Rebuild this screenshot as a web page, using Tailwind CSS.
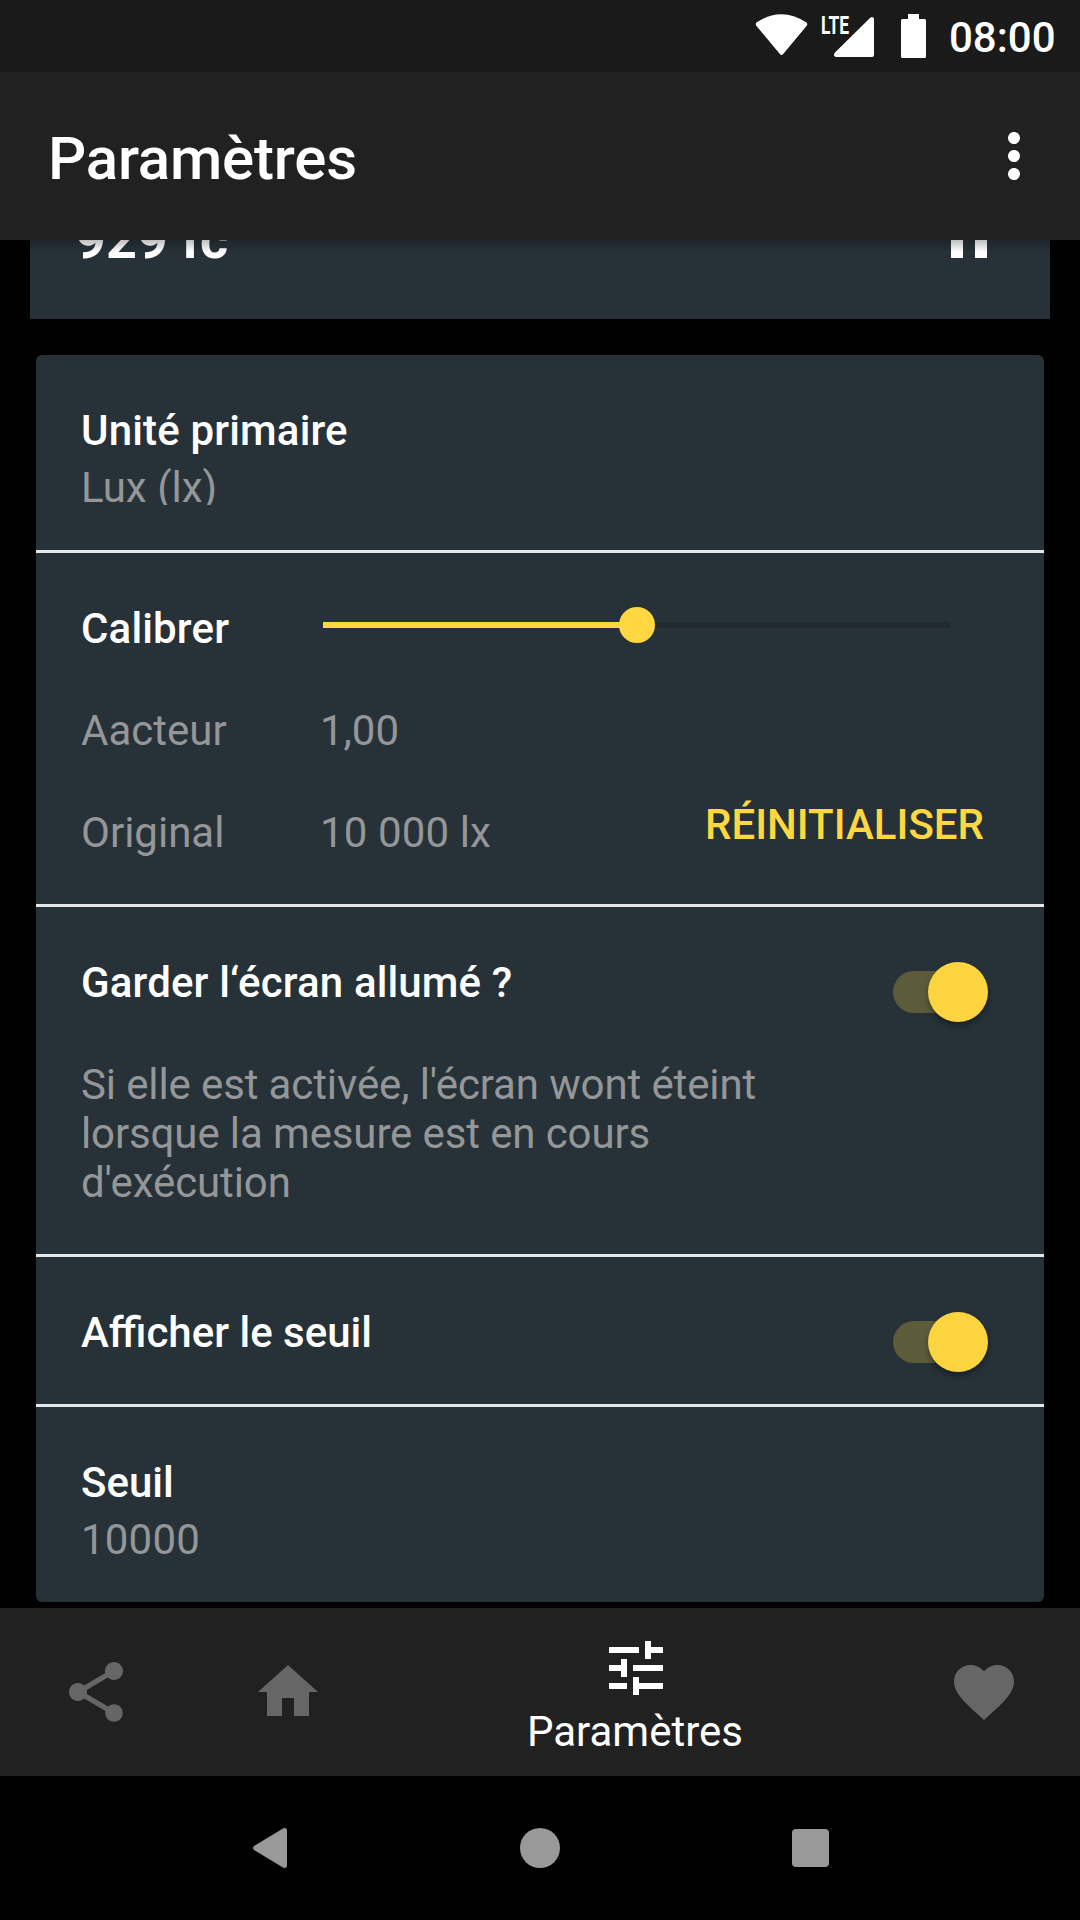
<!DOCTYPE html>
<html lang="fr">
<head>
  <meta charset="UTF-8" />
  <title>Paramètres</title>
  <script src="https://cdn.jsdelivr.net/npm/@tailwindcss/browser@4"></script>
</head>
<body class="bg-black font-['Roboto',sans-serif] text-[42px] leading-[49px] text-white">
  <div class="w-[1080px] h-[1920px] flex flex-col overflow-hidden">

    <!-- Status bar -->
    <div class="h-[72px] shrink-0 bg-[#1a1a1a] flex justify-end">
      <svg class="w-[300px] h-[72px]" viewBox="755 0 300 72" fill="#fff">
        <path d="M756.5 22.5Q781 6 806.5 22.5Q808 24 806.5 26L784 53Q781.500 57 779 53L756.500 26Q755 24 756.500 22.500Z" />
        <text x="821" y="34" font-size="26.5" font-weight="700" textLength="28" lengthAdjust="spacingAndGlyphs">LTE</text>
        <path d="M874 19V55Q874 57 872 57H836Q832.500 56 835 52.500L870 18Q873 15.500 874 19Z" />
        <path d="M908 14H919V19H924.500Q926 19 926 20.500V56.500Q926 58 924.500 58H902.500Q901 58 901 56.500V20.500Q901 19 902.500 19H908Z" />
        <text x="949" y="52" font-size="42" font-weight="500">08:00</text>
      </svg>
      <div class="w-[25px]"></div>
    </div>

    <!-- App bar -->
    <header class="h-[168px] shrink-0 bg-[#212121] flex items-center justify-between pl-12 pr-[30px]">
      <h1 class="text-[60px] leading-[70px] font-medium tracking-[-0.2px] pt-1.5">Paramètres</h1>
      <svg class="w-[72px] h-[72px]" viewBox="0 0 24 24" fill="#fff">
        <path d="M12 8c1.100 0 2-.9 2-2s-.9-2-2-2-2 .9-2 2 .9 2 2 2zm0 2c-1.100 0-2 .9-2 2s.9 2 2 2 2-.9 2-2-.9-2-2-2zm0 6c-1.100 0-2 .9-2 2s.9 2 2 2 2-.9 2-2-.9-2-2-2z" />
      </svg>
    </header>

    <!-- Scrolled content -->
    <main class="relative h-[1368px] shrink-0 overflow-hidden flex flex-col">
      <div class="absolute inset-x-0 top-0 h-3 bg-linear-to-b from-black/25 to-transparent"></div>

      <section class="mx-[30px] h-[79px] shrink-0 bg-[#263238] flex items-end justify-between pl-[45px] pr-[45px] pb-[46px]">
        <div class="text-[54px] leading-[64px] font-bold mb-px">929 fc</div>
        <svg class="w-[72px] h-[72px]" viewBox="0 0 24 24" fill="#fff">
          <path d="M6 19h4V5H6v14zm8-14v14h4V5h-4z" />
        </svg>
      </section>

      <section class="mx-9 mt-9 rounded-md bg-[#263238] divide-y-3 divide-[#e5e8e9] overflow-hidden">
        <div class="h-[198px] pl-[45px] pt-[51px]">
          <div class="font-medium tracking-[0.16px]">Unité primaire</div>
          <div class="text-[#949698] mt-2 h-[42px] overflow-hidden">Lux (lx)</div>
        </div>

        <div class="h-[354px] pl-[45px] pr-[60px] pt-[51px] flex flex-col gap-[53px]">
          <div class="flex">
            <div class="w-[242px] font-medium tracking-[0.16px]">Calibrer</div>
            <div class="relative mt-[3px] h-9 w-[627px] flex items-center">
              <div class="h-1.5 w-1/2 bg-[#ffd740]"></div>
              <div class="h-1.5 w-1/2 bg-[#212a2f]"></div>
              <div class="absolute left-1/2 -ml-[18px] size-9 rounded-full bg-[#ffd740]"></div>
            </div>
          </div>
          <div class="flex text-[#949698]">
            <div class="w-[239px]">Aacteur</div>
            <div>1,00</div>
          </div>
          <div class="flex text-[#949698]">
            <div class="w-[239px]">Original</div>
            <div class="tracking-[0.12px]">10 000 lx</div>
            <button class="ml-auto -mt-4 font-medium text-[#ffd740]">RÉINITIALISER</button>
          </div>
        </div>

        <div class="h-[350px] pl-[45px] pr-14 pt-[51px] flex justify-between">
          <div class="flex flex-col gap-[53px]">
            <div class="font-medium tracking-[0.14px]">Garder l‘écran allumé ?</div>
            <div class="text-[#949698] tracking-[-0.12px]">Si elle est activée, l'écran wont éteint<br />lorsque la mesure est en cours<br />d'exécution</div>
          </div>
          <div class="relative mt-[13px] h-[42px] w-[95px]">
            <div class="h-[42px] w-[86px] rounded-full bg-[#5d5c3a]"></div>
            <div class="absolute right-0 -top-[9px] size-[60px] rounded-full bg-[#fcd43f] shadow-[0_4px_6px_rgba(0,0,0,0.35)]"></div>
          </div>
        </div>

        <div class="h-[150px] pl-[45px] pr-14 pt-[51px] flex justify-between">
          <div class="font-medium">Afficher le seuil</div>
          <div class="relative mt-[13px] h-[42px] w-[95px]">
            <div class="h-[42px] w-[86px] rounded-full bg-[#5d5c3a]"></div>
            <div class="absolute right-0 -top-[9px] size-[60px] rounded-full bg-[#fcd43f] shadow-[0_4px_6px_rgba(0,0,0,0.35)]"></div>
          </div>
        </div>

        <div class="h-[195px] pl-[45px] pt-[51px]">
          <div class="font-medium">Seuil</div>
          <div class="text-[#949698] mt-2 tracking-[0.2px]">10000</div>
        </div>
      </section>
    </main>

    <!-- Bottom navigation -->
    <nav class="h-[168px] shrink-0 bg-[#212121] flex">
      <div class="w-[192px] flex items-center justify-center">
        <svg class="w-[72px] h-[72px]" viewBox="0 0 24 24" fill="#666">
          <path d="M18 16.080c-.76 0-1.440.3-1.960.77L8.910 12.700c.05-.23.09-.46.09-.7s-.04-.47-.09-.7l7.050-4.110c.54.5 1.250.81 2.040.81 1.660 0 3-1.340 3-3s-1.340-3-3-3-3 1.340-3 3c0 .24.04.47.09.7L8.040 9.810C7.500 9.310 6.790 9 6 9c-1.660 0-3 1.340-3 3s1.340 3 3 3c.79 0 1.500-.31 2.040-.81l7.120 4.160c-.05.21-.08.43-.08.65 0 1.610 1.310 2.920 2.920 2.920 1.610 0 2.920-1.310 2.920-2.920s-1.310-2.920-2.920-2.920z" />
        </svg>
      </div>
      <div class="w-[192px] flex items-center justify-center">
        <svg class="w-[72px] h-[72px]" viewBox="0 0 24 24" fill="#666">
          <path d="M10 20v-6h4v6h5v-8h3L12 3 2 12h3v8z" />
        </svg>
      </div>
      <div class="w-[504px] flex flex-col items-center pt-6">
        <svg class="w-[72px] h-[72px]" viewBox="0 0 24 24" fill="#fff">
          <path d="M3 17v2h6v-2H3zM3 5v2h10V5H3zm10 16v-2h8v-2h-8v-2h-2v6h2zM7 9v2H3v2h4v2h2V9H7zm14 4v-2H11v2h10zm-6-4h2V7h4V5h-4V3h-2v6z" />
        </svg>
        <div class="mt-[3px] pr-0.5">Paramètres</div>
      </div>
      <div class="w-[192px] flex items-center justify-center">
        <svg class="w-[72px] h-[72px]" viewBox="0 0 24 24" fill="#666">
          <path d="M12 21.350l-1.450-1.320C5.400 15.360 2 12.280 2 8.500 2 5.420 4.420 3 7.500 3c1.740 0 3.410.81 4.500 2.090C13.090 3.810 14.760 3 16.500 3 19.580 3 22 5.420 22 8.500c0 3.780-3.400 6.860-8.550 11.540L12 21.350z" />
        </svg>
      </div>
    </nav>

    <!-- System navigation -->
    <div class="h-36 shrink-0 flex items-center justify-center gap-[210px]">
      <svg class="size-[60px]" viewBox="0 0 60 60" fill="#999">
        <path d="M14 28L43 10.500Q47 9 47 13V47Q47 51 43 49.500L14 32Q12 30 14 28Z" />
      </svg>
      <div class="size-[60px] flex items-center justify-center">
        <div class="size-10 rounded-full bg-[#999]"></div>
      </div>
      <div class="size-[60px] flex items-center justify-center">
        <div class="w-[37px] h-[38px] rounded bg-[#999]"></div>
      </div>
    </div>
  </div>
</body>
</html>
